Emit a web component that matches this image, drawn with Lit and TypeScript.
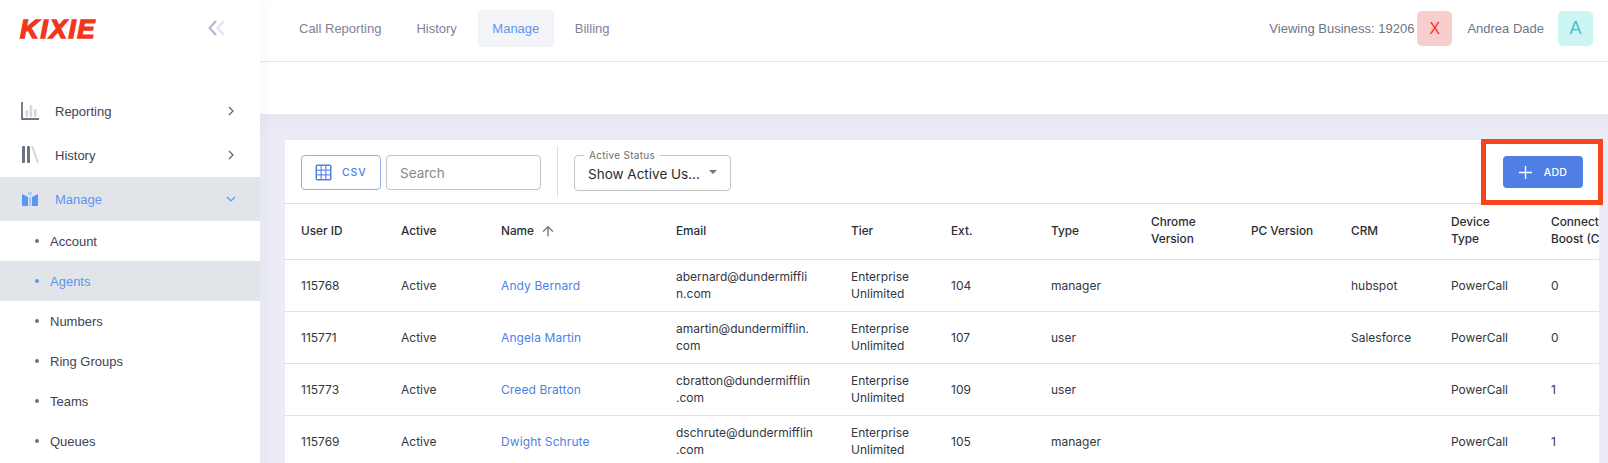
import { LitElement, html, css, svg } from "lit";
import { customElement } from "lit/decorators.js";

const rows = [
  ["115768", "Andy Bernard", ["abernard@dundermiffli", "n.com"], "104", "manager", "hubspot", "0"],
  ["115771", "Angela Martin", ["amartin@dundermifflin.", "com"], "107", "user", "Salesforce", "0"],
  ["115773", "Creed Bratton", ["cbratton@dundermifflin", ".com"], "109", "user", "", "1"],
  ["115769", "Dwight Schrute", ["dschrute@dundermifflin", ".com"], "105", "manager", "", "1"],
];

const chevR = svg`<path d="M1 1l4 4-4 4" fill="none" stroke="#5e6278" stroke-width="1.2"/>`;

@customElement("app-root")
export class AppRoot extends LitElement {
  static styles = css`
    :host { display: block; height: 463px; overflow: hidden; font-family: "Liberation Sans", Arial, sans-serif; font-size: 13px; background: #ebecf7; }
    .app { display: grid; grid-template-columns: 260px 1fr; height: 463px; overflow: hidden; }
    .side { background: #fff; position: relative; z-index: 2; box-shadow: 0 0 18px rgba(60,60,90,.05); overflow: hidden; }
    .brand { height: 89px; display: flex; justify-content: space-between; align-items: flex-start; padding: 16px 34px 0 20px; box-sizing: border-box; }
    .logo { font-weight: 700; font-style: italic; font-size: 26px; line-height: 27px; color: #f1361d; -webkit-text-stroke: 1.4px #f1361d; letter-spacing: 1.7px; }
    .collapse { margin-top: 4px; display: block; }
    .item { height: 44px; display: flex; align-items: center; padding: 0 26px 0 21px; color: #3f4254; }
    .item.on { background: #e1e4e8; color: #5c96f5; }
    .item svg.ic { width: 18px; height: 18px; margin-right: 16px; }
    .item span { flex: 1; }
    .sub { height: 40px; display: flex; align-items: center; padding-left: 35px; color: #3f4254; }
    .sub::before { content: ""; width: 4px; height: 4px; border-radius: 50%; background: #6c7281; margin-right: 11px; }
    .sub.on { background: #e1e4e8; color: #5c96f5; }
    .sub.on::before { background: #5c96f5; }
    .main { min-width: 0; display: flex; flex-direction: column; }
    .top { height: 61px; background: #fff; border-bottom: 1px solid #e4e5e8; display: flex; align-items: center; padding: 0 15px 0 25px; flex: none; }
    .tab { height: 37px; display: flex; align-items: center; padding: 0 14px; border-radius: 4px; color: #7e8299; margin-right: 7px; margin-top: -4px; }
    .tab.on { background: #f3f4f8; color: #5c96f5; padding: 0 14.5px; }
    .tabs { display: flex; flex: 1; }
    .who { color: #6e7585; margin-top: -4px; }
    .av { width: 35px; height: 35px; border-radius: 5px; display: flex; align-items: center; justify-content: center; font-size: 16px; margin-top: -4px; }
    .av.x { background: #f8cecc; color: #f1361d; margin: -4px 15px 0 3px; }
    .av.a { background: #cdf5f4; color: #3fc6c3; font-size: 18px; margin-left: 14px; }
    .strip { height: 52px; background: #fff; border-bottom: 1px solid #e6e6ec; flex: none; }
    .body { flex: 1; min-height: 0; padding: 25px 9px 0 25px; background: linear-gradient(#e6e7f1, #ebecf7 24px); overflow: hidden; }
    .card { background: #fff; position: relative; font-family: Inter, "Open Sans", sans-serif; font-size: 12px; color: #33363f; width: 1314px; }
    .bar { height: 63px; border-bottom: 1px solid #e2e2e5; display: flex; align-items: center; padding: 0 16px; }
    .csv { width: 80px; height: 35px; box-sizing: border-box; border: 1px solid #8fb0ee; border-radius: 4px; display: flex; align-items: center; padding-left: 13px; color: #4f7fe4; font-size: 10.5px; letter-spacing: .9px; font-weight: 500; gap: 10px; margin-right: 5px; margin-top: 1px; }
    .search { width: 155px; height: 35px; box-sizing: border-box; border: 1px solid #c4c4c4; border-radius: 4px; display: flex; align-items: center; padding: 2px 0 0 13px; color: #8a8a8a; font-size: 13.5px; margin-top: 1px; }
    .div { width: 1px; height: 51px; background: #dedede; margin: 0 16px; }
    .sel { position: relative; width: 157px; height: 36px; box-sizing: border-box; border: 1px solid #c4c4c4; border-radius: 4px; display: flex; align-items: center; padding: 2px 0 0 13px; color: #2b2b2b; font-size: 13.5px; margin-top: 2px; }
    .sel label { position: absolute; left: 9px; top: -6px; background: #fff; padding: 0 5px; font-size: 10px; line-height: 11px; color: #6f6f6f; letter-spacing: .3px; }
    .caret { position: absolute; right: 13px; top: 14px; width: 0; height: 0; border: 4.5px solid transparent; border-top: 4.5px solid #757575; border-bottom: 0; }
    .add { margin-left: auto; width: 80px; height: 32px; background: #4f7fe4; border-radius: 4px; color: #fff; display: flex; align-items: center; justify-content: center; gap: 12px; font-size: 10.5px; letter-spacing: .3px; font-weight: 500; margin-top: 1px; }
    .mark { position: absolute; left: 1196px; top: -1px; width: 122px; height: 66px; box-sizing: border-box; border: 5px solid #f4451f; pointer-events: none; z-index: 3; }
    .clip { overflow: hidden; }
    table { border-collapse: collapse; table-layout: fixed; width: 1350px; }
    th, td { text-align: left; padding: 0 16px; border-bottom: 1px solid #e2e2e5; box-sizing: border-box; vertical-align: middle; white-space: nowrap; }
    th { height: 55px; font-weight: 500; color: #2b2d33; line-height: 17px; font-size: 11.8px; }
    td { height: 52px; font-weight: 400; line-height: 17px; }
    td.n { color: #4f7fe4; letter-spacing: .1px; }
    .arrow { vertical-align: -4px; margin-left: 6px; }
  `;

  render() {
    const widths = [100, 100, 175, 175, 100, 100, 100, 100, 100, 100, 100, 100];
    return html`<div class="app">
      <aside class="side">
        <div class="brand">
          <div class="logo">KIXIE</div>
          <svg class="collapse" width="18" height="16" viewBox="0 0 18 16"><path d="M8 1L1.5 8 8 15" fill="none" stroke="#b3b5d2" stroke-width="2"/><path d="M16 1L9.5 8 16 15" fill="none" stroke="#e3e4ef" stroke-width="2"/></svg>
        </div>
        <div class="item">
          <svg class="ic" viewBox="0 0 18 18"><path d="M1 0v17h17" fill="none" stroke="#6c7281" stroke-width="1.8"/><rect x="4.5" y="8" width="2.6" height="7" rx="1" fill="#d5d7dc"/><rect x="8.7" y="3" width="2.6" height="12" rx="1" fill="#d5d7dc"/><rect x="13" y="7" width="2.6" height="8" rx="1" fill="#d5d7dc"/></svg>
          <span>Reporting</span>
          <svg width="6" height="10" viewBox="0 0 6 10">${chevR}</svg>
        </div>
        <div class="item">
          <svg class="ic" viewBox="0 0 18 18"><rect x="1" y="0" width="3" height="17" rx="1" fill="#6c7281"/><rect x="6" y="0" width="3" height="17" rx="1" fill="#6c7281"/><path d="M11 0l6 17" stroke="#d5d7dc" stroke-width="2" fill="none"/></svg>
          <span>History</span>
          <svg width="6" height="10" viewBox="0 0 6 10">${chevR}</svg>
        </div>
        <div class="item on">
          <svg class="ic" viewBox="0 0 18 18"><path d="M1 4l6 3v9H2a1 1 0 0 1-1-1z M17 4l-6 3v9h5a1 1 0 0 0 1-1z" fill="#5c96f5"/><circle cx="9" cy="3.5" r="2" fill="#a9c8f9"/><rect x="7.8" y="7" width="2.4" height="9" fill="#a9c8f9"/></svg>
          <span>Manage</span>
          <svg width="10" height="6" viewBox="0 0 10 6" style="margin-right:-2px"><path d="M1 1l4 4 4-4" fill="none" stroke="#5c96f5" stroke-width="1.2"/></svg>
        </div>
        ${["Account", "Agents", "Numbers", "Ring Groups", "Teams", "Queues"].map(
          (s) => html`<div class="sub ${s === "Agents" ? "on" : ""}">${s}</div>`
        )}
      </aside>
      <div class="main">
        <div class="top">
          <div class="tabs">
            <div class="tab">Call Reporting</div>
            <div class="tab">History</div>
            <div class="tab on">Manage</div>
            <div class="tab">Billing</div>
          </div>
          <div class="who">Viewing Business: 19206</div>
          <div class="av x">X</div>
          <div class="who">Andrea Dade</div>
          <div class="av a">A</div>
        </div>
        <div class="strip"></div>
        <div class="body">
          <div class="card">
            <div class="mark"></div>
            <div class="bar">
              <div class="csv">
                <svg width="17" height="17" viewBox="0 0 17 17"><rect x=".5" y=".5" width="16" height="16" rx="2" fill="#4f7fe4"/><g fill="#fff"><rect x="2" y="2" width="3.6" height="3.6"/><rect x="6.7" y="2" width="3.6" height="3.6"/><rect x="11.4" y="2" width="3.6" height="3.6"/><rect x="2" y="6.7" width="3.6" height="3.6"/><rect x="6.7" y="6.7" width="3.6" height="3.6"/><rect x="11.4" y="6.7" width="3.6" height="3.6"/><rect x="2" y="11.4" width="3.6" height="3.6"/><rect x="6.7" y="11.4" width="3.6" height="3.6"/><rect x="11.4" y="11.4" width="3.6" height="3.6"/></g></svg>
                CSV
              </div>
              <div class="search">Search</div>
              <div class="div"></div>
              <div class="sel"><label>Active Status</label>Show Active Us...<i class="caret"></i></div>
              <div class="add">
                <svg width="13" height="13" viewBox="0 0 13 13"><path d="M6.5 0v13M0 6.5h13" stroke="#fff" stroke-width="1.3"/></svg>
                ADD
              </div>
            </div>
            <div class="clip">
              <table>
                <colgroup>${widths.map((w) => html`<col style="width:${w}px" />`)}</colgroup>
                <thead><tr>
                  <th>User ID</th><th>Active</th>
                  <th>Name<svg class="arrow" width="16" height="16" viewBox="0 0 24 24"><path d="M4 12l1.41 1.41L11 7.83V20h2V7.83l5.58 5.59L20 12l-8-8-8 8z" fill="#757575"/></svg></th>
                  <th>Email</th><th>Tier</th><th>Ext.</th><th>Type</th>
                  <th>Chrome<br />Version</th><th>PC Version</th><th>CRM</th>
                  <th>Device<br />Type</th><th>Connect<br />Boost (C</th>
                </tr></thead>
                <tbody>
                  ${rows.map(
                    (r) => html`<tr>
                      <td>${r[0]}</td><td>Active</td><td class="n">${r[1]}</td>
                      <td>${(r[2] as string[])[0]}<br />${(r[2] as string[])[1]}</td>
                      <td>Enterprise<br />Unlimited</td><td>${r[3]}</td><td>${r[4]}</td>
                      <td></td><td></td><td>${r[5]}</td><td>PowerCall</td><td>${r[6]}</td>
                    </tr>`
                  )}
                </tbody>
              </table>
            </div>
          </div>
        </div>
      </div>
    </div>`;
  }
}
